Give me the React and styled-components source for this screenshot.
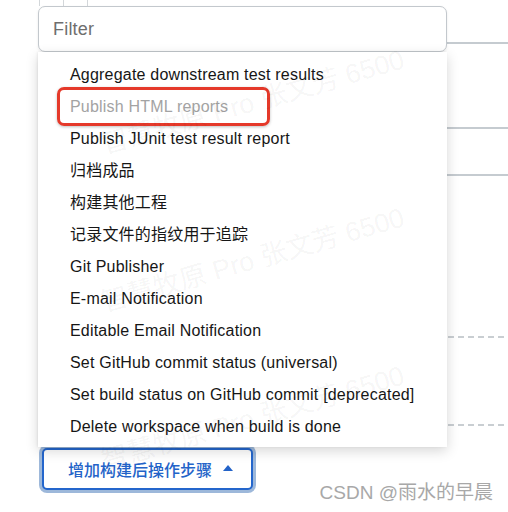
import React from 'react';
import styled, { createGlobalStyle } from 'styled-components';

const GlobalStyle = createGlobalStyle`
  body {
    margin: 0;
    background: #fff;
    font-family: "Liberation Sans", "Noto Sans CJK SC", sans-serif;
  }
`;

const Page = styled.div`
  position: relative;
  width: 508px;
  height: 512px;
  overflow: hidden;
  padding-left: 38px;
  box-sizing: border-box;
  display: flex;
  flex-direction: column;
`;

const Ticks = styled.div`
  display: flex;
  gap: 23px;
  height: 6px;
  padding-left: 1px;
`;

const Tick = styled.span`
  width: 1px;
  height: 100%;
  background: #d3d7da;
`;

const Rule = styled.div`
  margin-top: ${(props) => props.$top}px;
  height: 2px;
  background: ${(props) =>
    props.$dashed
      ? 'repeating-linear-gradient(90deg, #c9ced2 0 6px, transparent 6px 10px)'
      : '#c5cbd0'};
`;

const AddButton = styled.button`
  align-self: flex-start;
  margin: 22px 0 0 4px;
  height: 42px;
  padding: 0 18px 0 24px;
  display: flex;
  align-items: center;
  gap: 11px;
  background: #fff;
  border: 2px solid #2466cc;
  border-radius: 5px;
  box-shadow: 0 0 0 3px #9db8da;
  color: #2363c8;
  font-family: "Liberation Sans", "Noto Sans CJK SC", sans-serif;
  font-size: 16px;
  font-weight: 500;
`;

const Caret = styled.span`
  width: 0;
  height: 0;
  border-left: 5px solid transparent;
  border-right: 5px solid transparent;
  border-bottom: 6px solid #2363c8;
  margin-top: -2px;
`;

const Popup = styled.div`
  position: absolute;
  left: 38px;
  top: 6px;
  width: 409px;
  z-index: 2;
`;

const FilterInput = styled.input`
  display: block;
  box-sizing: border-box;
  width: 100%;
  height: 46px;
  padding: 0 14px;
  border: 1.5px solid #c3c8cd;
  border-radius: 7px;
  background: #fff;
  box-shadow: 0 1px 3px rgba(0, 0, 0, 0.08);
  font-family: "Liberation Sans", sans-serif;
  font-size: 18px;
  letter-spacing: 0.2px;
  outline: none;

  &::placeholder {
    color: #6e6e6e;
  }
`;

const Menu = styled.ul`
  list-style: none;
  margin: 0;
  padding: 7px 0 4px;
  background: #fff;
  box-shadow: 0 4px 12px rgba(0, 0, 0, 0.16), -1px 0 2px rgba(0, 0, 0, 0.06);
`;

const Item = styled.li`
  position: relative;
  height: 32px;
  line-height: 32px;
  padding-left: 32px;
  font-size: 16px;
  letter-spacing: 0.2px;
  color: ${(props) => (props.$disabled ? '#a3a3a3' : '#161616')};

  ${(props) =>
    props.$marked &&
    `
    &::after {
      content: '';
      position: absolute;
      left: 19px;
      top: -4px;
      width: 213px;
      height: 39px;
      box-sizing: border-box;
      border: 3px solid #e5392a;
      border-radius: 7px;
      box-shadow: 0 1px 3px rgba(0, 0, 0, 0.25);
    }
  `}
`;

const Watermarks = styled.div`
  position: absolute;
  inset: 0;
  pointer-events: none;
  z-index: 3;
`;

const Mark = styled.span`
  position: absolute;
  left: 95px;
  width: 330px;
  white-space: nowrap;
  font-size: 27px;
  color: rgba(0, 0, 0, 0.05);
  transform: rotate(-16deg);
  transform-origin: center;
`;

const Credit = styled.span`
  position: absolute;
  right: 15px;
  bottom: 8px;
  font-size: 19px;
  color: #a8a8a8;
  z-index: 3;
`;

const items = [
  { label: 'Aggregate downstream test results' },
  { label: 'Publish HTML reports', disabled: true, marked: true },
  { label: 'Publish JUnit test result report' },
  { label: '归档成品' },
  { label: '构建其他工程' },
  { label: '记录文件的指纹用于追踪' },
  { label: 'Git Publisher' },
  { label: 'E-mail Notification' },
  { label: 'Editable Email Notification' },
  { label: 'Set GitHub commit status (universal)' },
  { label: 'Set build status on GitHub commit [deprecated]' },
  { label: 'Delete workspace when build is done' },
];

const App = () => {
  return (
    <>
      <GlobalStyle />
      <Page>
        <Ticks>
          <Tick />
          <Tick />
          <Tick />
        </Ticks>
        <Rule $top={36} />
        <Rule $top={83} />
        <Rule $top={45} />
        <Rule $top={160} $dashed />
        <Rule $top={86} $dashed />
        <AddButton>
          增加构建后操作步骤
          <Caret />
        </AddButton>

        <Popup>
          <FilterInput placeholder="Filter" />
          <Menu>
            {items.map((item) => (
              <Item key={item.label} $disabled={item.disabled} $marked={item.marked}>
                {item.label}
              </Item>
            ))}
          </Menu>
        </Popup>

        <Watermarks>
          <Mark style={{ top: 78 }}>智慧牧原 Pro 张文芳 6500</Mark>
          <Mark style={{ top: 236 }}>智慧牧原 Pro 张文芳 6500</Mark>
          <Mark style={{ top: 394 }}>智慧牧原 Pro 张文芳 6500</Mark>
        </Watermarks>
        <Credit>CSDN @雨水的早晨</Credit>
      </Page>
    </>
  );
};

export default App;
